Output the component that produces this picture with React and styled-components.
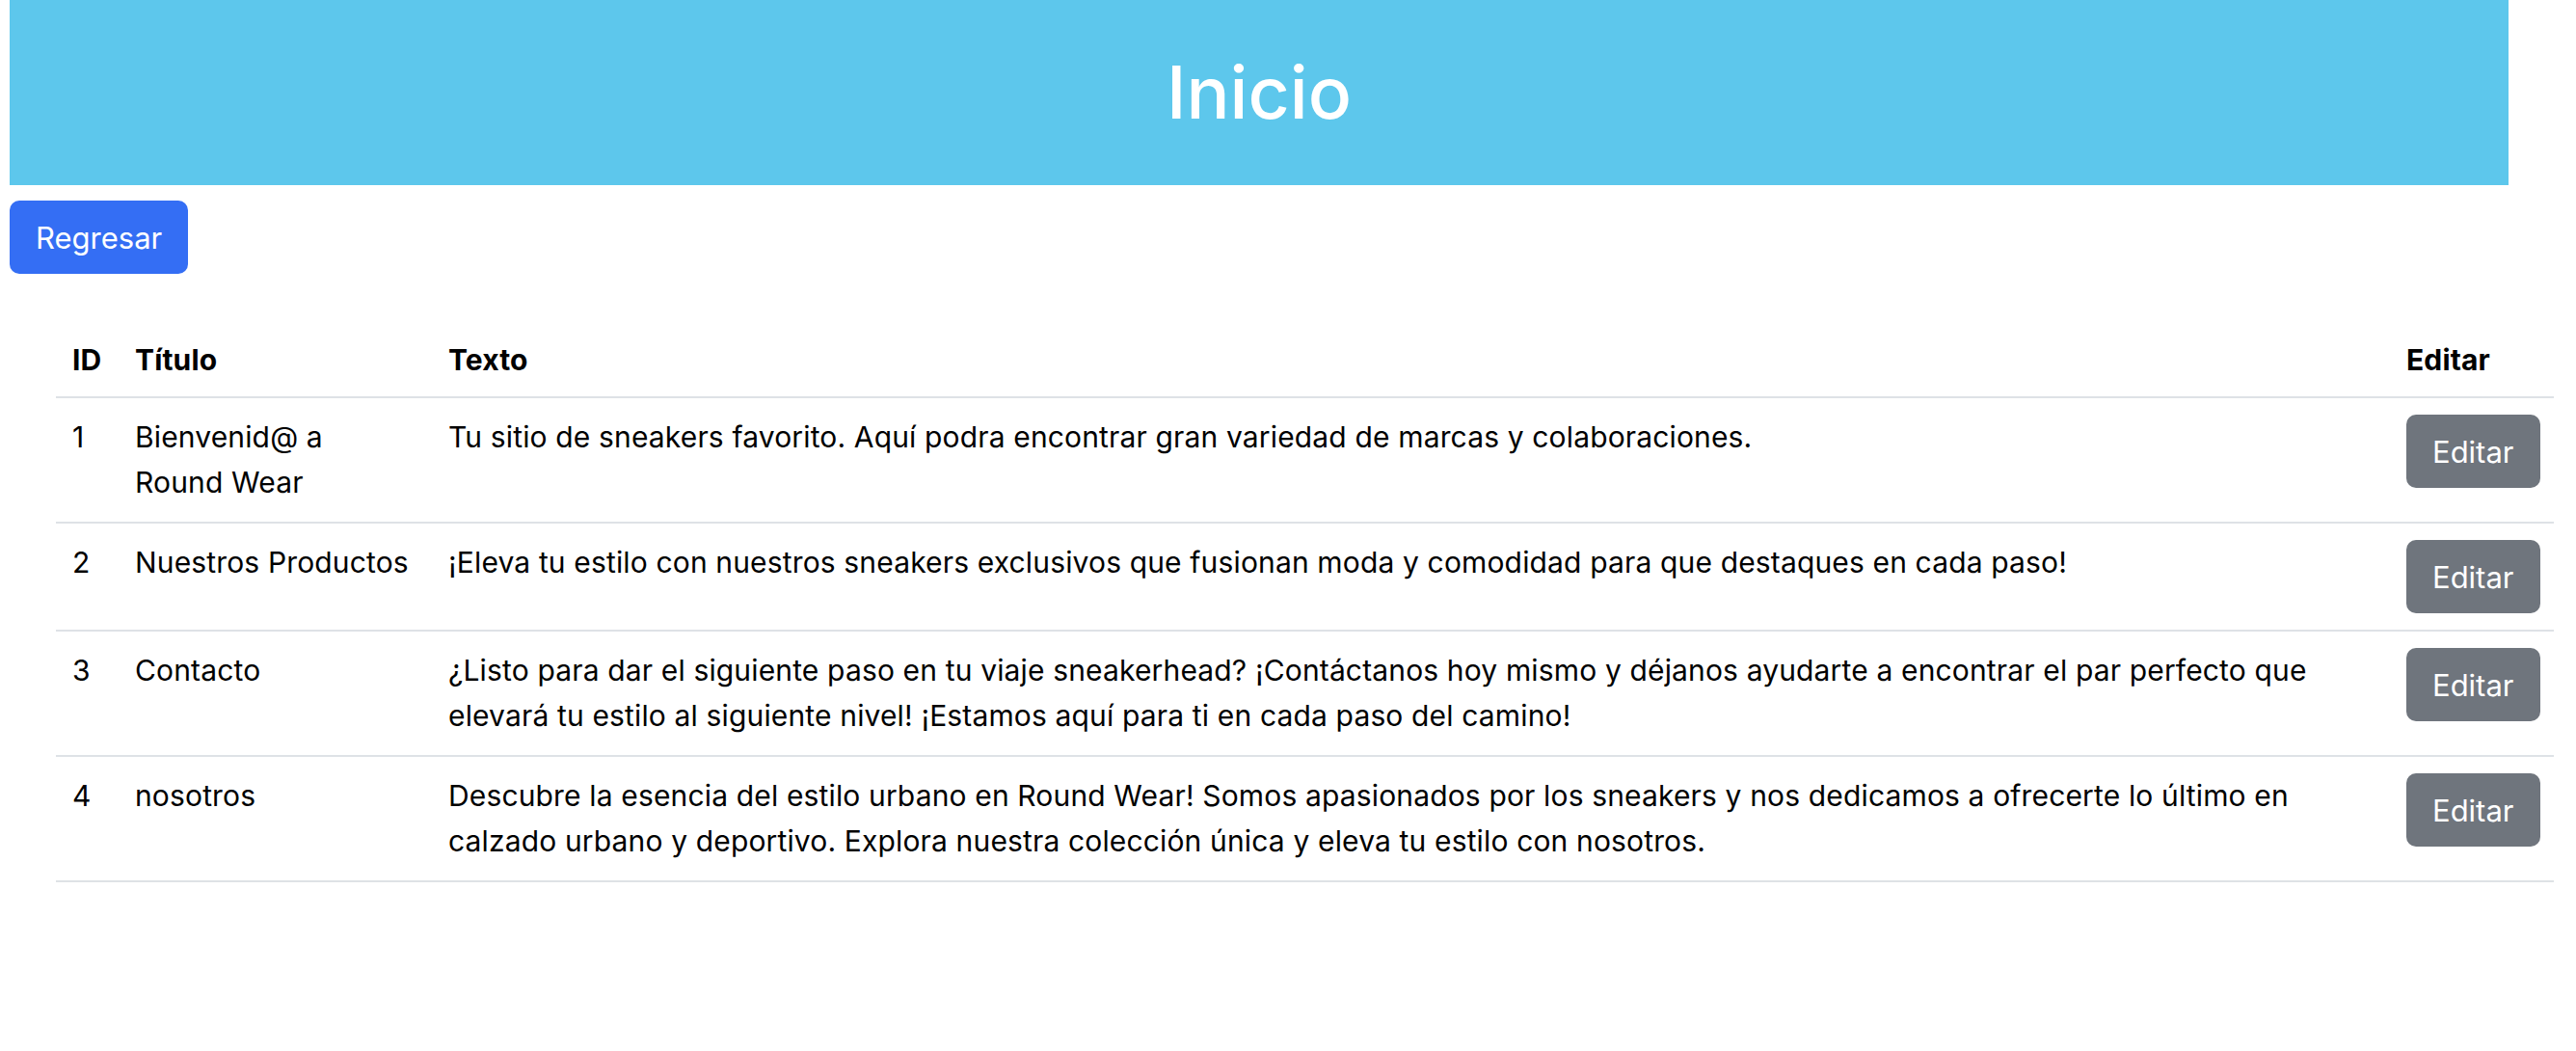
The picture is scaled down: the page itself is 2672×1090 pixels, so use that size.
import styled, { createGlobalStyle } from "styled-components";

const GlobalStyle = createGlobalStyle`
  body {
    margin: 0;
    background: #fff;
    color: #000;
    font-family: Inter, "Noto Sans", sans-serif;
  }
`;

const rows = [
  {
    id: 1,
    titulo: "Bienvenid@ a Round Wear",
    texto:
      "Tu sitio de sneakers favorito. Aquí podra encontrar gran variedad de marcas y colaboraciones.",
  },
  {
    id: 2,
    titulo: "Nuestros Productos",
    texto:
      "¡Eleva tu estilo con nuestros sneakers exclusivos que fusionan moda y comodidad para que destaques en cada paso!",
  },
  {
    id: 3,
    titulo: "Contacto",
    texto:
      "¿Listo para dar el siguiente paso en tu viaje sneakerhead? ¡Contáctanos hoy mismo y déjanos ayudarte a encontrar el par perfecto que elevará tu estilo al siguiente nivel! ¡Estamos aquí para ti en cada paso del camino!",
  },
  {
    id: 4,
    titulo: "nosotros",
    texto:
      "Descubre la esencia del estilo urbano en Round Wear! Somos apasionados por los sneakers y nos dedicamos a ofrecerte lo último en calzado urbano y deportivo. Explora nuestra colección única y eleva tu estilo con nosotros.",
  },
];

const App = () => {
  return (
    <Page>
      <GlobalStyle />
      <Banner>
        <h1>Inicio</h1>
      </Banner>
      <Button $variant="primary">Regresar</Button>
      <Table>
        <thead>
          <tr>
            <Th $w={31}>ID</Th>
            <Th $w={291}>Título</Th>
            <Th>Texto</Th>
            <Th $w={136}>Editar</Th>
          </tr>
        </thead>
        <tbody>
          {rows.map((r) => (
            <tr key={r.id}>
              <Td>{r.id}</Td>
              <Td>{r.titulo}</Td>
              <Td>{r.texto}</Td>
              <Td>
                <Button $variant="secondary">Editar</Button>
              </Td>
            </tr>
          ))}
        </tbody>
      </Table>
    </Page>
  );
};

export default App;

const Page = styled.div`
  padding: 0 0 60px 10px;
  display: flex;
  flex-direction: column;
  align-items: flex-start;
`;

const Banner = styled.header`
  width: 2592px;
  height: 192px;
  background: #5dc7ec;
  display: flex;
  align-items: center;
  justify-content: center;

  h1 {
    margin: 0;
    color: #fff;
    font-size: 75px;
    font-weight: 500;
    line-height: 1.2;
  }
`;

const Button = styled.button`
  margin-top: ${(p) => (p.$variant === "primary" ? "16px" : "0")};
  height: 76px;
  padding: 0 27px;
  border: none;
  border-radius: 10px;
  font-family: Inter, "Noto Sans", sans-serif;
  font-size: 31px;
  color: #fff;
  background: ${(p) => (p.$variant === "primary" ? "#346ef4" : "#6f757d")};
  cursor: pointer;
`;

const Table = styled.table`
  margin: 52px 0 0 48px;
  width: 2591px;
  border-collapse: collapse;
  table-layout: fixed;
  font-size: 30px;
  letter-spacing: 0.15px;
  line-height: 47px;

  tr {
    border-bottom: 2px solid #dee2e6;
  }
`;

const Th = styled.th`
  width: ${(p) => (p.$w ? `${p.$w}px` : "auto")};
  text-align: left;
  font-weight: 700;
  padding: 14px 17px 14px;
  vertical-align: bottom;
`;

const Td = styled.td`
  padding: 17px 17px 17px;
  vertical-align: top;
`;
